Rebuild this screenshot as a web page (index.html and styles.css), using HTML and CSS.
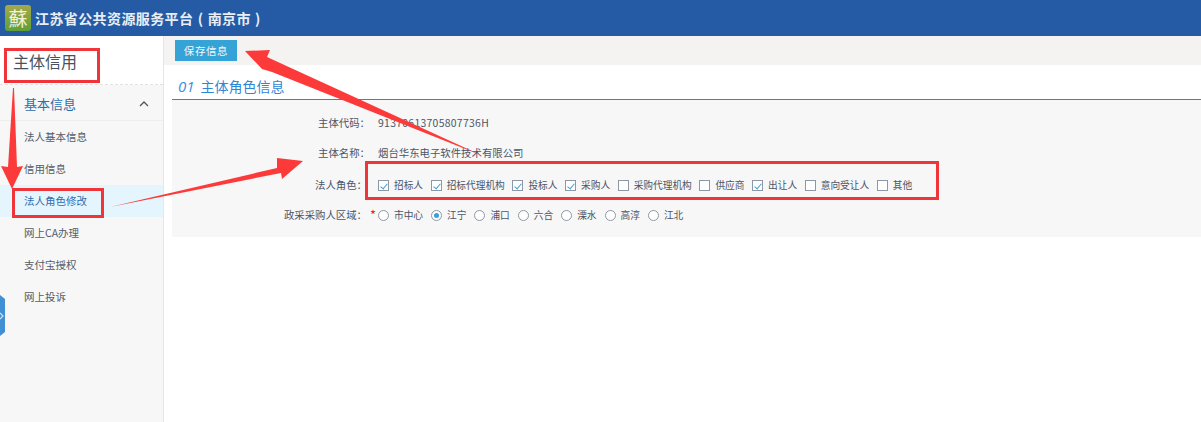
FILE: index.html
```html
<!DOCTYPE html>
<html lang="zh">
<head>
<meta charset="utf-8">
<title>江苏省公共资源服务平台</title>
<link rel="stylesheet" href="styles.css">
</head>
<body>
<header class="topbar">
  <div class="logo"><span class="logo-text">蘇</span></div>
  <h1 class="site-title">江苏省公共资源服务平台 ( 南京市 )</h1>
</header>
<div class="body-row">
  <aside class="sidebar">
    <div class="side-title">主体信用</div>
    <div class="side-group">
      <span>基本信息</span>
      <svg class="chev" width="10" height="6" viewBox="0 0 10 6"><path d="M1 5l4-4 4 4" fill="none" stroke="#555" stroke-width="1.3"/></svg>
    </div>
    <nav class="side-nav">
      <a class="side-item">法人基本信息</a>
      <a class="side-item">信用信息</a>
      <a class="side-item active">法人角色修改</a>
      <a class="side-item">网上CA办理</a>
      <a class="side-item">支付宝授权</a>
      <a class="side-item">网上投诉</a>
    </nav>
  </aside>
  <main class="main">
    <div class="toolbar"><button class="save-btn">保存信息</button></div>
    <div class="section-head"><i class="section-no">01</i><span>主体角色信息</span></div>
    <section class="panel">
      <div class="row row-a"><label class="lab">主体代码：</label><span class="code">91370613705807736H</span></div>
      <div class="row row-b"><label class="lab">主体名称：</label><span>烟台华东电子软件技术有限公司</span></div>
      <div class="row row-c"><label class="lab">法人角色：</label>
        <div class="opts">
          <span class="opt"><b class="cb on"></b>招标人</span>
          <span class="opt"><b class="cb on"></b>招标代理机构</span>
          <span class="opt"><b class="cb on"></b>投标人</span>
          <span class="opt"><b class="cb on"></b>采购人</span>
          <span class="opt"><b class="cb"></b>采购代理机构</span>
          <span class="opt"><b class="cb"></b>供应商</span>
          <span class="opt"><b class="cb on"></b>出让人</span>
          <span class="opt"><b class="cb"></b>意向受让人</span>
          <span class="opt"><b class="cb"></b>其他</span>
        </div>
      </div>
      <div class="row row-d"><label class="lab">政采采购人区域：</label><em class="req">*</em>
        <div class="opts radios">
          <span class="opt"><b class="rd"></b>市中心</span>
          <span class="opt"><b class="rd on"></b>江宁</span>
          <span class="opt"><b class="rd"></b>浦口</span>
          <span class="opt"><b class="rd"></b>六合</span>
          <span class="opt"><b class="rd"></b>溧水</span>
          <span class="opt"><b class="rd"></b>高淳</span>
          <span class="opt"><b class="rd"></b>江北</span>
        </div>
      </div>
    </section>
  </main>
</div>
<div class="side-tab"><svg width="5" height="10" viewBox="0 0 5 10"><path d="M0 2l3 3-3 3" fill="none" stroke="#cfe3f5" stroke-width="1.2"/></svg></div>
<div class="mark mark-title"></div>
<div class="mark mark-item"></div>
<div class="mark mark-roles"></div>
<svg class="arrows" width="1201" height="422" viewBox="0 0 1201 422">
  <polygon fill="#fc3a3a" points="13,88 14,88 17,167 23,166 12,189 1,166 8,167"/>
  <polygon fill="#fc3a3a" points="110,207 277,168 277,158 303,161 282,179 281,173"/>
  <polygon fill="#fc3a3a" points="245,51 270,50 267,57 483,156 272,72 262,69"/>
</svg>
</body>
</html>
```
FILE: styles.css
```css
* { box-sizing: border-box; }
html, body { margin: 0; padding: 0; }
body {
  width: 1201px;
  height: 422px;
  overflow: hidden;
  position: relative;
  background: #fff;
  color: #4a5568;
  font: 10.4px/14px "Noto Sans CJK SC", "Open Sans", sans-serif;
}
.topbar {
  height: 36px;
  background: #255ba5;
  display: flex;
  align-items: center;
  padding-left: 5px;
  gap: 4px;
}
.logo {
  width: 26px;
  height: 26px;
  border-radius: 3px;
  background: linear-gradient(#a5a94a, #5f9f38);
  display: flex;
  align-items: center;
  justify-content: center;
}
.logo-text { color: #f3f2d8; font-size: 19px; line-height: 20px; font-weight: 400; }
.site-title {
  margin: 0;
  color: #e8eef6;
  font-size: 14px;
  line-height: 20px;
  font-weight: 700;
  letter-spacing: 0.4px;
  word-spacing: 0.7px;
  white-space: pre;
}
.body-row { display: flex; height: 386px; }
.sidebar {
  width: 164px;
  flex: none;
  background: #f7f7f7;
  border-right: 1px solid #e6e6e6;
}
.side-title {
  height: 49px;
  background: #fff;
  border-bottom: 1px dashed #e2e2e2;
  padding: 14px 0 0 13px;
  font-size: 16px;
  line-height: 22px;
  color: #4a5160;
}
.side-group {
  height: 36px;
  padding: 2px 14px 0 24px;
  display: flex;
  align-items: center;
  justify-content: space-between;
  font-size: 13px;
  color: #2e6cb0;
  border-bottom: 1px solid #eeeeee;
}
.side-nav { display: flex; flex-direction: column; }
.side-item {
  height: 32px;
  padding-left: 24px;
  display: flex;
  align-items: center;
  font-size: 10.5px;
  color: #555c68;
}
.side-item.active { background: #e5f5fd; color: #2e6cb0; }
.main { flex: 1; min-width: 0; }
.toolbar {
  height: 29px;
  background: #f4f3f2;
  padding: 4px 0 0 11px;
}
.save-btn {
  display: block;
  width: 62px;
  height: 21px;
  padding: 0;
  border: 0;
  background: #36a3d6;
  color: #f1f8fc;
  font: 10.5px/21px "Noto Sans CJK SC", sans-serif;
  letter-spacing: 0.6px;
}
.section-head {
  margin-left: 8px;
  height: 35px;
  border-bottom: 1px solid #2f86d6;
  display: flex;
  align-items: center;
  gap: 6px;
  padding: 8px 0 0 6px;
  color: #2f86d6;
  font-size: 14px;
}
.section-no { font: italic 15px "Open Sans", sans-serif; color: #3a8fdc; }
.panel {
  margin-left: 8px;
  height: 137px;
  padding-top: 13px;
  background: #f7f7f7;
}
.row { display: flex; align-items: center; height: 20px; }
.row-b { margin-top: 10px; }
.row-c { margin-top: 12px; }
.row-d { margin-top: 10px; }
.code { letter-spacing: 0.3px; }
.lab { width: 206px; text-align: right; flex: none; padding-right: 8px; }
.row-c .lab { padding-right: 11px; }
.row-d .lab { width: 195px; padding-right: 0; }
.req { color: #e22; font-style: normal; font-size: 13px; width: 8px; margin-left: 3px; }
.opts { display: flex; align-items: center; gap: 7.6px; white-space: nowrap; font-size: 9.7px; }
.radios { gap: 8px; }
.opt { display: flex; align-items: center; gap: 5px; }
.cb {
  width: 11px;
  height: 11px;
  border: 1px solid #8e97a6;
  background: #fff;
  position: relative;
  flex: none;
}
.cb.on::after {
  content: "";
  position: absolute;
  left: 3px;
  top: 1px;
  width: 3px;
  height: 6px;
  border: solid #36a3d6;
  border-width: 0 1.5px 1.5px 0;
  transform: rotate(40deg);
}
.rd {
  width: 11px;
  height: 11px;
  border: 1px solid #8e97a6;
  border-radius: 50%;
  background: #fff;
  position: relative;
  flex: none;
}
.rd.on::after {
  content: "";
  position: absolute;
  left: 2px;
  top: 2px;
  width: 5px;
  height: 5px;
  border-radius: 50%;
  background: #36a3d6;
}
.side-tab {
  position: absolute;
  left: 0;
  top: 295px;
  width: 5px;
  height: 41px;
  background: #4190d6;
  clip-path: polygon(0 0, 100% 10%, 100% 90%, 0 100%);
  display: flex;
  align-items: center;
}
.mark { position: absolute; border: 3px solid #f0353a; pointer-events: none; }
.mark-title { left: 4px; top: 48px; width: 96px; height: 35px; }
.mark-item { left: 12px; top: 188px; width: 92px; height: 30px; }
.mark-roles { left: 365px; top: 161px; width: 574px; height: 39px; }
.arrows { position: absolute; left: 0; top: 0; pointer-events: none; }
```
